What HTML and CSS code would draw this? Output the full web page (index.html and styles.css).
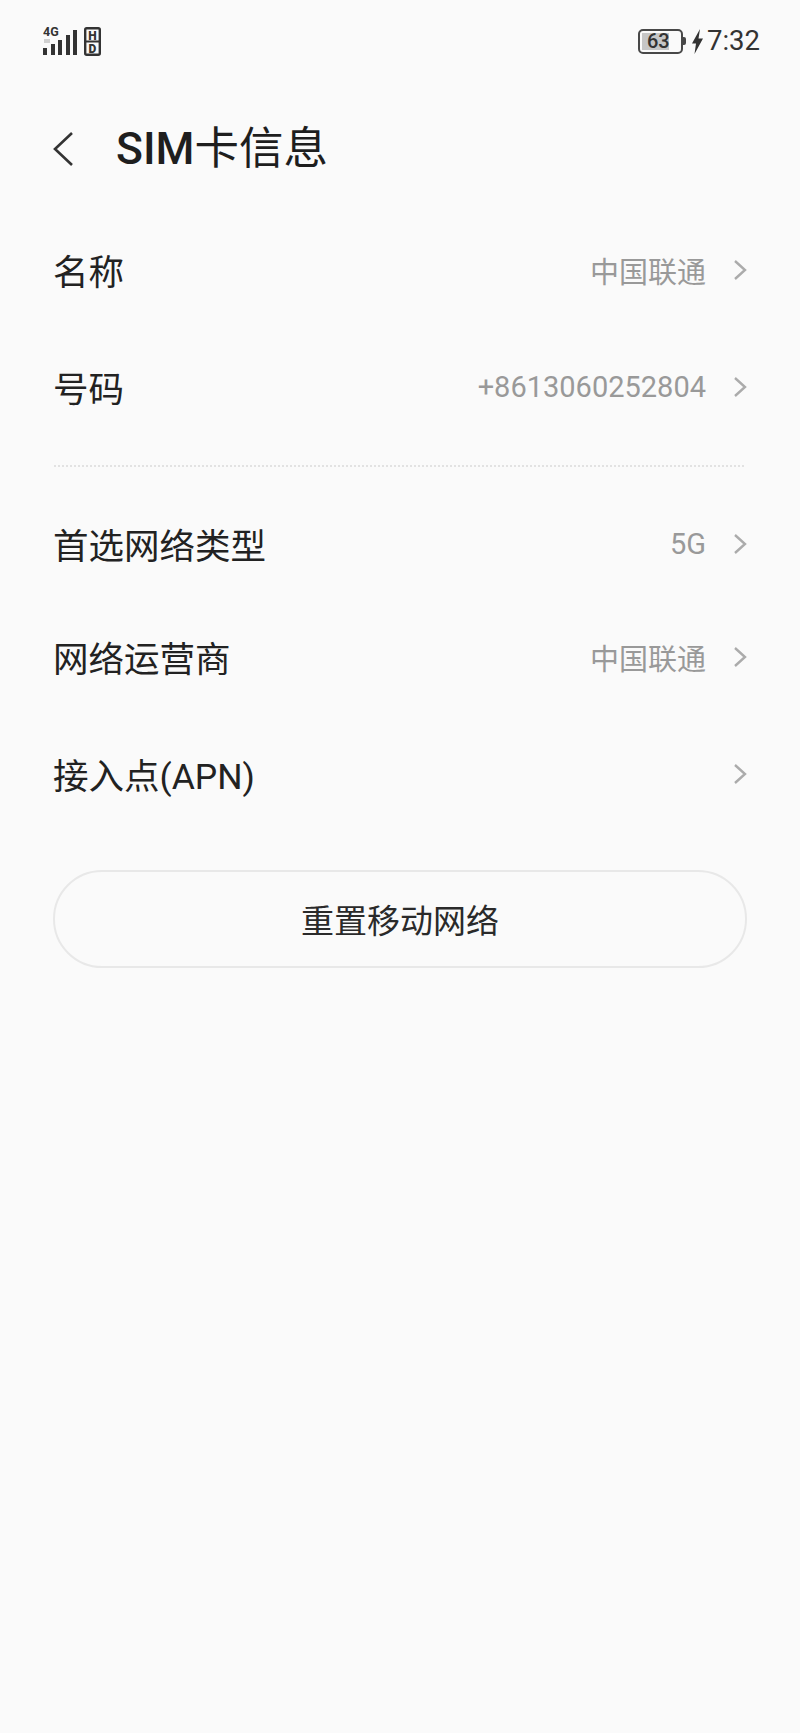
FILE: index.html
```html
<!DOCTYPE html>
<html lang="zh-CN">
<head>
<meta charset="utf-8">
<title>SIM卡信息</title>
<link rel="stylesheet" href="styles.css">
</head>
<body>
<div class="status">
  <div class="status-left">
    <svg class="signal" width="36" height="34" viewBox="0 -4 36 34">
      <text x="0" y="10" class="net">4G</text>
      <rect x="1" y="13" width="6" height="4" fill="#d0d0d0"/>
      <rect x="0" y="22" width="4" height="7" fill="#333"/>
      <rect x="8" y="18" width="4" height="11" fill="#333"/>
      <rect x="15" y="14" width="4" height="15" fill="#333"/>
      <rect x="23" y="9" width="4" height="20" fill="#333"/>
      <rect x="30" y="4" width="4" height="25" fill="#333"/>
    </svg>
    <svg class="hd" width="17" height="29" viewBox="0 0 17 29">
      <rect x="1.200" y="1.200" width="14.600" height="26.600" rx="1.500" fill="none" stroke="#333" stroke-width="2.400"/>
      <rect x="1" y="13.500" width="15" height="2" fill="#333"/>
      <text x="8.500" y="12.500" class="hd-letter">H</text>
      <text x="8.500" y="25.500" class="hd-letter">D</text>
    </svg>
  </div>
  <div class="status-right">
    <div class="battery">
      <div class="battery-fill"></div>
      <span class="battery-text">63</span>
      <div class="battery-cap"></div>
    </div>
    <svg class="bolt" width="11" height="25" viewBox="0 0 11 25"><path d="M8 0 0 14.500h4L2.500 25 11 9.500H6.500z" fill="#333"/></svg>
    <span class="time">7:32</span>
  </div>
</div>

<header class="title-bar">
  <svg class="back" width="22" height="36" viewBox="0 0 22 36"><path d="M20 2 3 18l17 16" fill="none" stroke="#333" stroke-width="2.600"/></svg>
  <h1 class="title"><span class="title-latin">SIM</span>卡信息</h1>
</header>

<section class="group group-first">
  <div class="row"><span class="label">名称</span><span class="value">中国联通</span><svg class="chev" width="14" height="22" viewBox="0 0 14 22"><path d="M2 2l10 9-10 9" fill="none" stroke="#ababab" stroke-width="2.400"/></svg></div>
  <div class="row"><span class="label">号码</span><span class="value">+8613060252804</span><svg class="chev" width="14" height="22" viewBox="0 0 14 22"><path d="M2 2l10 9-10 9" fill="none" stroke="#ababab" stroke-width="2.400"/></svg></div>
</section>
<div class="divider"></div>
<section class="group">
  <div class="row"><span class="label">首选网络类型</span><span class="value">5G</span><svg class="chev" width="14" height="22" viewBox="0 0 14 22"><path d="M2 2l10 9-10 9" fill="none" stroke="#ababab" stroke-width="2.400"/></svg></div>
  <div class="row row-raised"><span class="label">网络运营商</span><span class="value">中国联通</span><svg class="chev" width="14" height="22" viewBox="0 0 14 22"><path d="M2 2l10 9-10 9" fill="none" stroke="#ababab" stroke-width="2.400"/></svg></div>
  <div class="row"><span class="label">接入点(APN)</span><svg class="chev" width="14" height="22" viewBox="0 0 14 22"><path d="M2 2l10 9-10 9" fill="none" stroke="#ababab" stroke-width="2.400"/></svg></div>
</section>
<div class="btn-wrap"><div class="reset">重置移动网络</div></div>
</body>
</html>
```

FILE: styles.css
```css
* { box-sizing: border-box; }
html, body { margin: 0; padding: 0; }
body {
  width: 800px;
  height: 1733px;
  background: #fafafa;
  color: #222;
  font-family: Roboto, "Noto Sans CJK SC", sans-serif;
  overflow: hidden;
}
.status {
  height: 80px;
  padding: 22px 40px 0 43px;
  display: flex;
  justify-content: space-between;
  align-items: flex-start;
}
.status-left { display: flex; gap: 5px; align-items: flex-end; }
.net { font: 700 12.500px Roboto, sans-serif; fill: #333; }
.hd-letter { font: 900 12px Roboto, sans-serif; fill: #333; text-anchor: middle; }
.status-right { display: flex; align-items: center; height: 30px; margin-top: 4px; color: #333; }
.battery {
  position: relative;
  width: 45px;
  height: 25px;
  border: 2.500px solid #484848;
  border-radius: 5px;
  margin-right: 9px;
}
.battery-fill {
  position: absolute;
  left: 2px; top: 2px; bottom: 2px;
  width: 27px;
  background: #c6c6c6;
}
.battery-text {
  position: absolute;
  left: 7px; top: 0; bottom: 0;
  display: flex;
  align-items: center;
  font-size: 20px;
  font-weight: 500;
  color: #333;
}
.battery-cap {
  position: absolute;
  right: -5.500px; top: 6px;
  width: 3px; height: 8px;
  background: #484848;
  border-radius: 0 2px 2px 0;
}
.bolt { margin-right: 4px; }
.time { font-size: 27.500px; line-height: 30px; color: #333; }
.title-bar {
  height: 68px;
  margin-top: 35px;
  padding-left: 52px;
  display: flex;
  align-items: center;
}
.back { margin-right: 42px; }
.title { margin: 0; font-size: 44.500px; font-weight: 400; color: #1e1e1e; line-height: 68px; }
.title-latin { font-weight: 500; }
.group-first { margin-top: 28px; }
.group-first .row { height: 117px; }
.row {
  height: 115px;
  padding: 0 53px 0 53px;
  display: flex;
  align-items: center;
}
.row-raised { padding-bottom: 4px; }
.label { font-size: 35.500px; font-weight: 400; color: #222; flex: 1; }
.value { font-size: 29px; font-weight: 400; color: #999; margin-right: 27px; }
.divider {
  height: 0;
  margin: 20px 56px 19px 54px;
  border-top: 2px dotted #e2e2e2;
}
.btn-wrap { padding: 39px 53px 0; }
.reset {
  height: 98px;
  border: 2px solid #e8e8e8;
  border-radius: 49px;
  display: flex;
  align-items: center;
  justify-content: center;
  font-size: 33px;
  font-weight: 400;
  color: #2a2a2a;
}
```
